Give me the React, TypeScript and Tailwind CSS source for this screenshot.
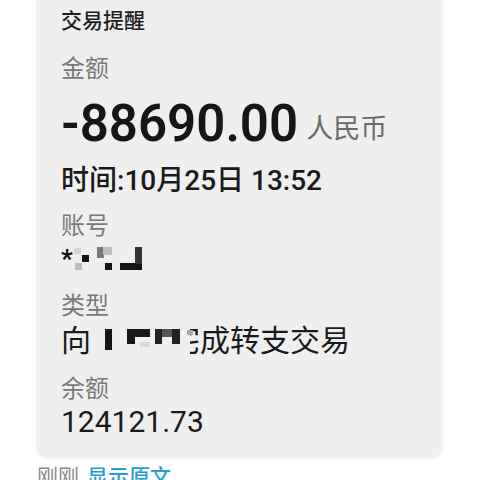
import React from "react"

const font = { fontFamily: 'Roboto, "Noto Sans CJK SC", sans-serif' }

function AccountMask() {
  // pixelated account number
  return (
    <svg width="90" height="30" viewBox="0 0 90 30" className="block">
      <text x="0" y="24" fontSize="26" fontWeight="700" fill="#111" fontFamily="Roboto, sans-serif">*</text>
      <rect x="13" y="4" width="7" height="6" fill="#d6d6d6" />
      <rect x="21" y="11" width="7" height="7" fill="#151515" />
      <rect x="14" y="19" width="7" height="7" fill="#bdbdbd" />
      <rect x="36" y="3" width="7" height="11" fill="#7a7a7a" />
      <rect x="42" y="3" width="9" height="8" fill="#bcbcbc" />
      <rect x="44" y="19" width="7" height="7" fill="#151515" />
      <rect x="59" y="19" width="22" height="7" fill="#151515" />
      <rect x="74" y="3" width="7" height="17" fill="#333" />
    </svg>
  )
}

function TypeMask() {
  // pixelated counterparty name, covers the left part of the next glyph
  return (
    <svg width="102" height="34" viewBox="0 0 102 34" className="block -mr-[23px] relative z-10">
      <rect x="79" y="0" width="20" height="34" fill="#efefef" />
      <rect x="14" y="6" width="7" height="21" fill="#161616" />
      <rect x="36" y="6" width="23" height="8" fill="#1a1a1a" />
      <rect x="36" y="14" width="8" height="7" fill="#1a1a1a" />
      <rect x="49" y="19" width="10" height="5" fill="#d9d9d9" />
      <rect x="64" y="6" width="7" height="8" fill="#222" />
      <rect x="71" y="6" width="10" height="8" fill="#555" />
      <rect x="81" y="6" width="8" height="8" fill="#222" />
      <rect x="64" y="14" width="7" height="7" fill="#222" />
      <rect x="81" y="14" width="8" height="7" fill="#222" />
      <rect x="96" y="7" width="6" height="5" fill="#aaa" />
    </svg>
  )
}

export default function App() {
  return (
    <div className="w-[480px] h-[480px] bg-white overflow-hidden" style={font}>
      <div className="ml-[36px] w-[407px] -mt-3 pt-3 pb-[22px] pl-[25px] bg-[#efefef] rounded-xl shadow-[0_0_6px_rgba(0,0,0,0.06)]">
        <div className="h-[44px] flex items-center text-[21px] font-medium text-[#1e1e1e]">交易提醒</div>
        <div className="mt-[5px] h-[40px] flex items-center text-[24px] text-[#7a7a7a]">金额</div>
        <div className="mt-[7px] h-[56px] flex items-center">
          <span className="text-[51px] font-semibold text-[#161616]">-88690.00</span>
          <span className="ml-[8px] mt-[10px] text-[27px] text-[#6a6a6a]">人民币</span>
        </div>
        <div className="mt-[9px] h-[40px] flex items-center text-[28px] font-medium text-[#1a1a1a]">时间:10月25日 13:52</div>
        <div className="mt-[8px] h-[34px] flex items-center text-[24px] text-[#7a7a7a]">账号</div>
        <div className="mt-[1px] h-[30px] flex items-center">
          <AccountMask />
        </div>
        <div className="mt-[15px] h-[34px] flex items-center text-[24px] text-[#7a7a7a]">类型</div>
        <div className="h-[34px] flex items-center text-[30px] text-[#1a1a1a]">
          <span>向</span>
          <TypeMask />
          <span>宅成转支交易</span>
        </div>
        <div className="mt-[17px] h-[30px] flex items-center text-[24px] text-[#7a7a7a]">余额</div>
        <div className="mt-[2px] h-[30px] flex items-center text-[30px] text-[#1a1a1a]">124121.73</div>
      </div>
      <div className="ml-[37px] h-[40px] flex items-center text-[21px]">
        <span className="text-[#8a8a8a]">刚刚</span>
        <span className="ml-[8px] text-[#2a9dd4] font-medium">显示原文</span>
      </div>
    </div>
  )
}
